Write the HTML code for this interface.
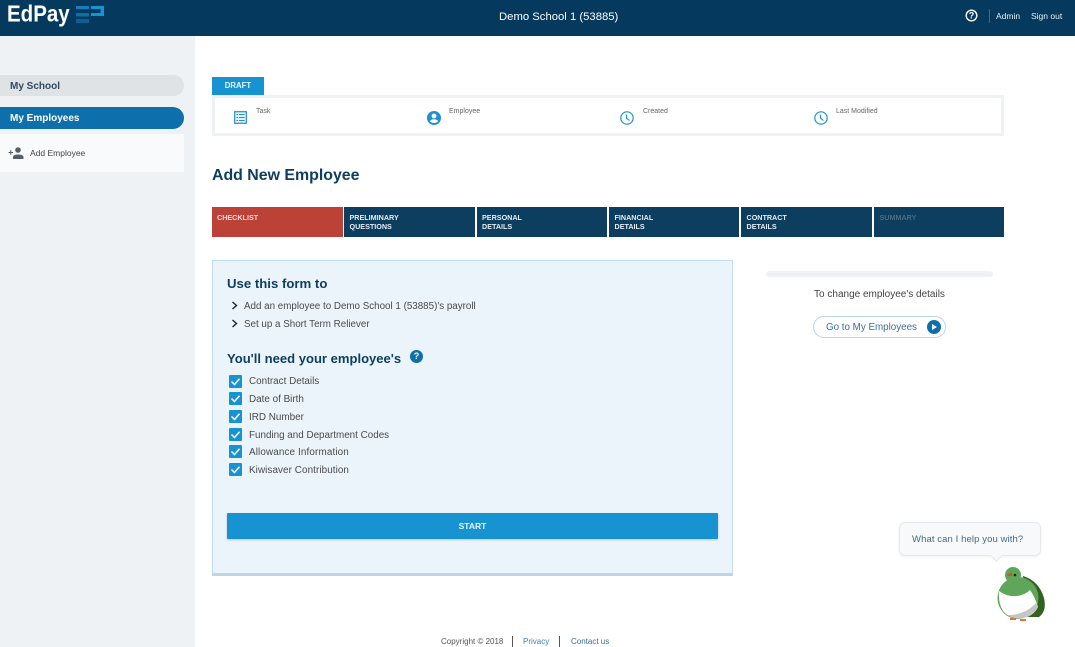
<!DOCTYPE html>
<html>
<head>
<meta charset="utf-8">
<style>
html,body{margin:0;padding:0;background:#fff}
body{width:1075px;height:647px;overflow:hidden;position:relative;font-family:"Liberation Sans",sans-serif;color:#444}
div,span,a,svg{position:absolute;white-space:nowrap}
.step{top:207px;height:30px;width:131px;background:#0d3d5f;color:#e4edf3;font-size:7.200px;font-weight:bold;line-height:9.500px;padding:0}
.step span{left:5.500px;top:5.500px}
.lbl{font-size:7px;color:#666;top:108px}
.chk{left:229px;width:13px;height:13px;background:#1893d1;border-radius:1px}
.cl{left:249px;font-size:9.900px;color:#4a4a4a}
</style>
</head>
<body>
<div style="left:0;top:0;width:1075px;height:36px;background:#053a5e"></div>
<div style="left:7px;top:1px;font-size:20.500px;font-weight:bold;color:#fff;line-height:28px;transform:scaleY(1.12);transform-origin:0 50%">EdPay</div>
<svg style="left:75px;top:5px" width="30" height="20">
<rect x="1" y="1" width="13" height="3" fill="#1380bd"/><rect x="1" y="8" width="13" height="3.500" fill="#0d6fa8"/><rect x="1" y="14" width="13" height="4" fill="#0d6094"/>
<path d="M16 1H29V11H16V8H25.500V4H16Z" fill="#1893d1"/>
</svg>
<div style="left:499px;top:11px;font-size:11.300px;color:#fff;line-height:13px">Demo School 1 (53885)</div>
<svg style="left:965px;top:9px" width="13" height="13" viewBox="0 0 13 13"><circle cx="6.500" cy="6.500" r="5.300" fill="none" stroke="#fff" stroke-width="1.400"/><text x="6.500" y="9.700" font-size="9" font-weight="bold" text-anchor="middle" fill="#fff" font-family="Liberation Sans">?</text></svg>
<div style="left:989px;top:9px;width:1px;height:14px;background:#3a6a8a"></div>
<div style="left:996px;top:11px;font-size:8.500px;color:#e8eef3">Admin</div>
<div style="left:1031px;top:11px;font-size:8.500px;color:#e8eef3">Sign out</div>

<div style="left:0;top:36px;width:195px;height:611px;background:#eef2f5"></div>
<div style="left:0;top:75px;width:184px;height:21px;background:#dfe3e6;border-radius:0 11px 11px 0"></div>
<div style="left:10px;top:81px;font-size:10px;font-weight:bold;color:#2f4a63">My School</div>
<div style="left:0;top:107px;width:184px;height:22px;background:#0d70ac;border-radius:0 11px 11px 0"></div>
<div style="left:10px;top:113px;font-size:10px;font-weight:bold;color:#fff">My Employees</div>
<div style="left:0;top:134px;width:184px;height:38px;background:#f8fafc"></div>
<svg style="left:8px;top:147px" width="16" height="12" viewBox="0 0 16 12"><circle cx="10" cy="3" r="2.800" fill="#555f68"/><path d="M5 12V10Q5 7.500 10 7.500T15.500 10V12Z" fill="#555f68"/><path d="M0.500 5.500H5M2.750 3.200V7.800" stroke="#555f68" stroke-width="1.100"/></svg>
<div style="left:30px;top:148px;font-size:8.500px;color:#444">Add Employee</div>

<div style="left:212px;top:77px;width:52px;height:18px;background:#1893d1;color:#e8f4fb;font-size:7.800px;font-weight:bold;line-height:18px;text-align:center">DRAFT</div>
<div style="left:212px;top:95px;width:786px;height:35px;border:3px solid #eef2f6;background:#fff"></div>
<svg style="left:234px;top:111px" width="13" height="13" viewBox="0 0 13 13"><rect x=".7" y=".7" width="11.600" height="11.600" fill="#e3f1fa" stroke="#1f8fcf" stroke-width="1.200"/><path d="M2.500 3.500H4M5 3.500H10.500M2.500 6.500H4M5 6.500H10.500M2.500 9.500H4M5 9.500H10.500" stroke="#1f8fcf" stroke-width="1.100"/></svg>
<div class="lbl" style="left:256px">Task</div>
<svg style="left:427px;top:111px" width="14" height="14" viewBox="0 0 14 14"><circle cx="7" cy="7" r="7" fill="#1f8fcf"/><circle cx="7" cy="5" r="2.400" fill="#fff"/><path d="M2.800 10.300Q4 8.300 7 8.300T11.200 10.300Q9.500 12 7 12T2.800 10.300Z" fill="#fff"/></svg>
<div class="lbl" style="left:449px">Employee</div>
<svg style="left:620px;top:111px" width="14" height="14" viewBox="0 0 14 14"><circle cx="7" cy="7" r="6.200" fill="none" stroke="#1f8fcf" stroke-width="1.200"/><path d="M6.500 3.500V7.200L9.500 9.500" fill="none" stroke="#1f8fcf" stroke-width="1.100"/></svg>
<div class="lbl" style="left:643px">Created</div>
<svg style="left:814px;top:111px" width="14" height="14" viewBox="0 0 14 14"><circle cx="7" cy="7" r="6.200" fill="none" stroke="#1f8fcf" stroke-width="1.200"/><path d="M6.500 3.500V7.200L9.500 9.500" fill="none" stroke="#1f8fcf" stroke-width="1.100"/></svg>
<div class="lbl" style="left:836px">Last Modified</div>

<div style="left:212px;top:166px;font-size:15.900px;font-weight:bold;color:#0d3d5f;line-height:20px">Add New Employee</div>

<div class="step" style="left:212px;background:#bc4137;color:#f3dcd9"><span style="left:5px">CHECKLIST</span></div>
<div class="step" style="left:344px"><span>PRELIMINARY<br>QUESTIONS</span></div>
<div class="step" style="left:477px;width:130px"><span style="left:5px">PERSONAL<br>DETAILS</span></div>
<div class="step" style="left:609px;width:130px"><span>FINANCIAL<br>DETAILS</span></div>
<div class="step" style="left:741px"><span>CONTRACT<br>DETAILS</span></div>
<div class="step" style="left:874px;width:130px;color:#4f6a7e"><span>SUMMARY</span></div>

<div style="left:212px;top:260px;width:519px;height:312px;background:#ebf4fb;border:1px solid #c5dcea;border-bottom:3px solid #bcd6e6"></div>
<div style="left:227px;top:275px;font-size:13.200px;font-weight:bold;color:#0d3d5f;line-height:17px">Use this form to</div>
<svg style="left:231px;top:301px" width="8" height="9"><path d="M1.500 1L5.500 4.500L1.500 8" fill="none" stroke="#222" stroke-width="1.400"/></svg>
<div style="left:244px;top:301px;font-size:9.800px;color:#4a4a4a">Add an employee to Demo School 1 (53885)'s payroll</div>
<svg style="left:231px;top:319px" width="8" height="9"><path d="M1.500 1L5.500 4.500L1.500 8" fill="none" stroke="#222" stroke-width="1.400"/></svg>
<div style="left:244px;top:319px;font-size:9.800px;color:#4a4a4a">Set up a Short Term Reliever</div>
<div style="left:227px;top:350px;font-size:13.050px;font-weight:bold;color:#0d3d5f;line-height:17px">You'll need your employee's</div>
<div style="left:410px;top:350px;width:13px;height:13px;border-radius:50%;background:#0d70ac;color:#fff;font-size:9px;font-weight:bold;text-align:center;line-height:13px">?</div>

<div class="chk" style="top:375px"></div><svg style="left:229px;top:375px" width="13" height="13"><path d="M2.500 6.500L5.500 9.500L10.500 3.800" fill="none" stroke="#fff" stroke-width="1.500"/></svg><div class="cl" style="top:376px">Contract Details</div>
<div class="chk" style="top:392px"></div><svg style="left:229px;top:392px" width="13" height="13"><path d="M2.500 6.500L5.500 9.500L10.500 3.800" fill="none" stroke="#fff" stroke-width="1.500"/></svg><div class="cl" style="top:394px">Date of Birth</div>
<div class="chk" style="top:410px"></div><svg style="left:229px;top:410px" width="13" height="13"><path d="M2.500 6.500L5.500 9.500L10.500 3.800" fill="none" stroke="#fff" stroke-width="1.500"/></svg><div class="cl" style="top:412px">IRD Number</div>
<div class="chk" style="top:428px"></div><svg style="left:229px;top:428px" width="13" height="13"><path d="M2.500 6.500L5.500 9.500L10.500 3.800" fill="none" stroke="#fff" stroke-width="1.500"/></svg><div class="cl" style="top:430px;font-size:9.850px">Funding and Department Codes</div>
<div class="chk" style="top:445px"></div><svg style="left:229px;top:445px" width="13" height="13"><path d="M2.500 6.500L5.500 9.500L10.500 3.800" fill="none" stroke="#fff" stroke-width="1.500"/></svg><div class="cl" style="top:447px;letter-spacing:.13px">Allowance Information</div>
<div class="chk" style="top:463px"></div><svg style="left:229px;top:463px" width="13" height="13"><path d="M2.500 6.500L5.500 9.500L10.500 3.800" fill="none" stroke="#fff" stroke-width="1.500"/></svg><div class="cl" style="top:465px;letter-spacing:.08px">Kiwisaver Contribution</div>

<div style="left:227px;top:513px;width:491px;height:26px;background:#1893d1;color:#e8f4fb;font-size:8.500px;font-weight:bold;line-height:26px;text-align:center;border-radius:1px;box-shadow:0 1px 2px rgba(0,0,0,.2)">START</div>

<div style="left:766px;top:271px;width:227px;height:6px;background:#eef2f6;border-radius:3px"></div>
<div style="left:766px;width:227px;top:289px;text-align:center;font-size:10px;color:#444">To change employee's details</div>
<div style="left:813px;top:316px;width:131px;height:20px;border:1px solid #bcd6e6;border-radius:11px;background:#fff"></div>
<div style="left:826px;top:322px;font-size:9.800px;color:#3a6f9a">Go to My Employees</div>
<svg style="left:927px;top:320px" width="14" height="14" viewBox="0 0 14 14"><circle cx="7" cy="7" r="7" fill="#0d70ac"/><path d="M5 4L10 7L5 10Z" fill="#fff"/></svg>

<div style="left:441px;top:637px;font-size:8px;color:#555">Copyright © 2018</div>
<div style="left:512px;top:636px;width:1px;height:11px;background:#555"></div>
<div style="left:523px;top:637px;font-size:8px;color:#3a86b8">Privacy</div>
<div style="left:559px;top:636px;width:1px;height:11px;background:#555"></div>
<div style="left:571px;top:637px;font-size:8px;color:#3a6f9a">Contact us</div>

<div style="left:899px;top:522px;width:140px;height:32px;background:#f7f9fb;border:1px solid #e6e9ec;border-radius:6px;box-shadow:0 1px 2px rgba(0,0,0,.06)"></div>
<div style="left:912px;top:534px;font-size:9.500px;letter-spacing:.1px;color:#456a85">What can I help you with?</div>
<div style="left:992px;top:551px;width:8px;height:8px;background:#f7f9fb;transform:rotate(45deg);border-right:1px solid #e6e9ec;border-bottom:1px solid #e6e9ec"></div>
<svg style="left:995px;top:565px" width="54" height="58" viewBox="0 0 54 58">
<path d="M28 11Q44 16 49 33Q52 46 44 52L30 52Z" fill="#33611f"/>
<ellipse cx="23" cy="33" rx="20.500" ry="21" fill="#5fa55a"/>
<circle cx="18" cy="10" r="8" fill="#5fa55a"/>
<path d="M4 26Q12 32 22 31Q30 30 35 25Q40 32 43 42Q38 52 26 53.500Q14 53.500 8 46Q3 38 4 26Z" fill="#fff"/>
<path d="M43 42Q38 52 26 53.500Q18 53.500 13 50Q30 50 41 38Z" fill="#c4c6c6"/>
<path d="M11 10.500L17 7.500L17 11Z" fill="#e0491f"/>
<circle cx="20" cy="10" r="1.300" fill="#222"/>
<path d="M15 54H21M25 55H31" stroke="#e8703a" stroke-width="2"/>
</svg>
</body>
</html>
